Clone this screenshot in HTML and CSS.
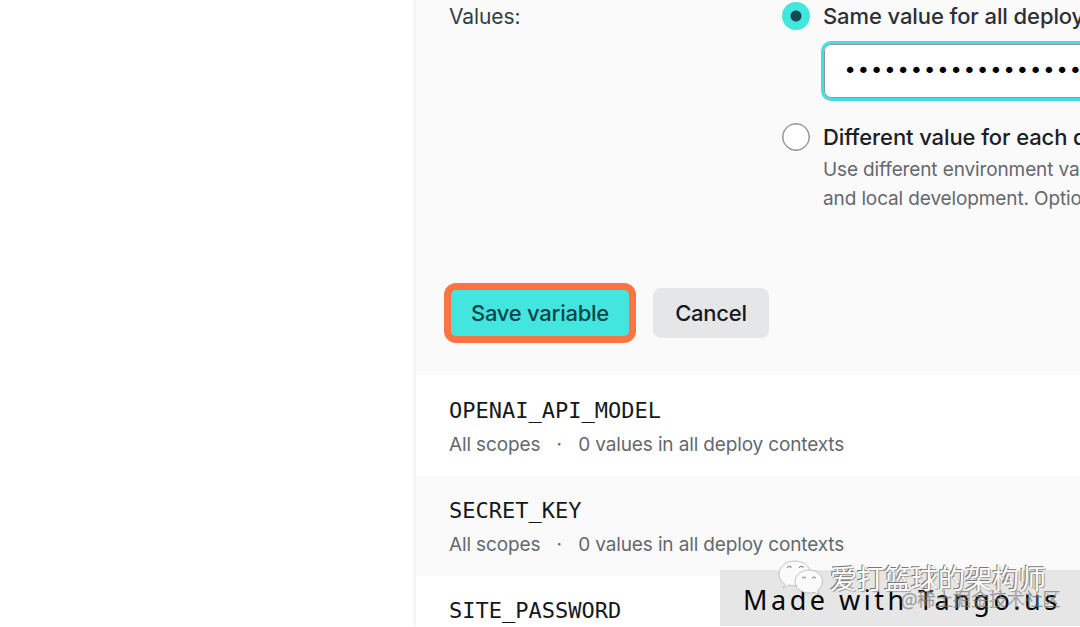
FILE: index.html
```
<!DOCTYPE html>
<html lang="en">
<head>
<meta charset="utf-8">
<title>Environment variables</title>
<link rel="stylesheet" href="styles.css">
</head>
<body>
<main class="panel">
  <section class="editor">
    <div class="fields">
      <div class="label">Values:</div>
      <div class="options">
        <div class="option first">
          <span class="radio checked"></span>
          <div class="option-body">
            <div class="title">Same value for all deploy contexts</div>
            <div class="secret">••••••••••••••••••••••••</div>
          </div>
        </div>
        <div class="option">
          <span class="radio"></span>
          <div class="option-body">
            <div class="title different">Different value for each deploy context</div>
            <div class="hint">Use different environment values for production<br>and local development. Optional values</div>
          </div>
        </div>
      </div>
    </div>
    <div class="actions">
      <button class="save">Save variable</button>
      <button class="cancel">Cancel</button>
    </div>
  </section>
  <section class="row">
    <div class="key">OPENAI_API_MODEL</div>
    <div class="meta"><span>All scopes</span><span class="dot">·</span><span>0 values in all deploy contexts</span></div>
  </section>
  <section class="row tinted">
    <div class="key">SECRET_KEY</div>
    <div class="meta"><span>All scopes</span><span class="dot">·</span><span>0 values in all deploy contexts</span></div>
  </section>
  <section class="row last">
    <div class="key">SITE_PASSWORD</div>
  </section>
</main>
<div class="badge">Made with Tango.us</div>
<div class="community">@稀土掘金技术社区</div>
<div class="author">
  <svg class="chat" viewBox="0 0 46 36" width="46" height="36">
    <path class="bubble" d="M17 1C8 1 1 6.500 1 14c0 4.500 2.500 8 6 10.200L5 28l6-3c2 .6 4 .9 7 .8C28 25.500 33 20 32.500 13 32 6 25 1 17 1Z"/>
    <path class="bubble" d="M31 10c-8 0-14 5-14 11.500S23 33 31 33c2 0 3.500-.3 5-.8l5 2.500-1.500-4.500c3-2 5-5 5-8.700C44.500 15 39 10 31 10Z"/>
    <path class="eyes" d="M9.500 8a1.800 1.800 0 0 1 3.600 0M21.500 8a1.800 1.800 0 0 1 3.600 0M24.500 18.500a1.500 1.500 0 0 1 3 0M34.500 18.500a1.500 1.500 0 0 1 3 0"/>
  </svg>
  <span>爱打篮球的架构师</span>
</div>
</body>
</html>
```
FILE: styles.css
```
* { box-sizing: border-box; }
body {
  margin: 0;
  width: 1080px;
  height: 627px;
  position: relative;
  overflow: hidden;
  background: #fff;
  color: #1b2024;
  font-family: Inter, "Liberation Sans", sans-serif;
}
.panel {
  margin-left: 416px;
  height: 627px;
  overflow: hidden;
  background: #fff;
  box-shadow: 0 0 5px rgba(0, 0, 0, .13);
}
.editor {
  height: 375px;
  background: #fafafa;
  overflow: hidden;
  white-space: nowrap;
}
.fields { display: flex; height: 283px; padding-left: 33px; }
.label { width: 333px; flex: none; padding-top: 3px; font-size: 21px; line-height: 28px; letter-spacing: -.1px; color: #373c42; }
.options { flex: none; width: 400px; }
.option { display: flex; gap: 13px; }
.option.first { height: 123px; }
.radio {
  flex: none;
  width: 28px;
  height: 28px;
  border: 1px solid #858889;
  box-shadow: inset 0 0 0 .5px #929598;
  border-radius: 50%;
  background: #fff;
}
.first .radio { margin-top: 2px; }
.radio.checked { border: 0; box-shadow: none; background: radial-gradient(circle, #134b50 0 5px, #43e5df 6px); }
.title { font-weight: 500; font-size: 22px; line-height: 28px; letter-spacing: -.1px; }
.first .title { padding-top: 2px; color: #2c3035; }
.secret {
  margin: 11px 0 0 -2px;
  width: 420px;
  height: 60px;
  padding-left: 19.500px;
  border: 3px solid #45e0dc;
  border-radius: 10px;
  background: #fff;
  box-shadow: inset 0 0 0 1px #89979a;
  color: #000;
  font: 22px/53px "DejaVu Sans Mono", monospace;
}
.hint { padding-top: 4px; font-size: 19px; line-height: 29px; letter-spacing: -.12px; color: #64686d; }
.actions { display: flex; gap: 17px; align-items: center; padding-left: 28px; height: 60px; }
button { padding: 0; font: 500 22px/28px Inter, sans-serif; letter-spacing: -.25px; }
.save {
  width: 192px;
  height: 60px;
  border: 7px solid #ff7442;
  border-radius: 12px;
  background: #43e5df;
  color: #0e444a;
}
.cancel { width: 116px; height: 50px; border: 0; border-radius: 8px; background: #e5e6e8; color: #15191d; }
.row { height: 101px; padding: 22px 0 0 33px; }
.row.tinted { height: 100px; padding-top: 21px; background: #fafafa; }
.row.last { padding-top: 21px; }
.key { font: 22px/28px "DejaVu Sans Mono", monospace; color: #15181b; }
.meta { display: flex; padding-top: 6px; font-size: 19px; line-height: 28px; letter-spacing: -.14px; color: #64686d; }
.dot { width: 38px; text-align: center; }
.badge {
  position: absolute;
  left: 720px;
  top: 570px;
  width: 360px;
  height: 56px;
  padding-left: 23px;
  background: #e6e6e6;
  color: #050505;
  font: 27px/60px "Noto Sans", sans-serif;
  letter-spacing: 3.5px;
  white-space: nowrap;
}
.community {
  position: absolute;
  left: 901px;
  top: 584px;
  font: 300 18px/28px "Noto Sans CJK SC", sans-serif;
  letter-spacing: -.1px;
  color: rgba(200, 200, 200, .4);
  -webkit-text-stroke: .5px rgba(100, 100, 100, .75);
  white-space: nowrap;
}
.author {
  position: absolute;
  left: 778px;
  top: 560px;
  display: flex;
  gap: 6px;
  color: #fff;
  font: 27px/36px "Noto Sans CJK SC", sans-serif;
  text-shadow: -1px -1px 0 #777, 1px 1px 1px #999;
  white-space: nowrap;
}
.bubble { fill: #fafafa; stroke: #aaa; stroke-width: .7; }
.eyes { fill: none; stroke: #888; stroke-width: 1.1; }
```
